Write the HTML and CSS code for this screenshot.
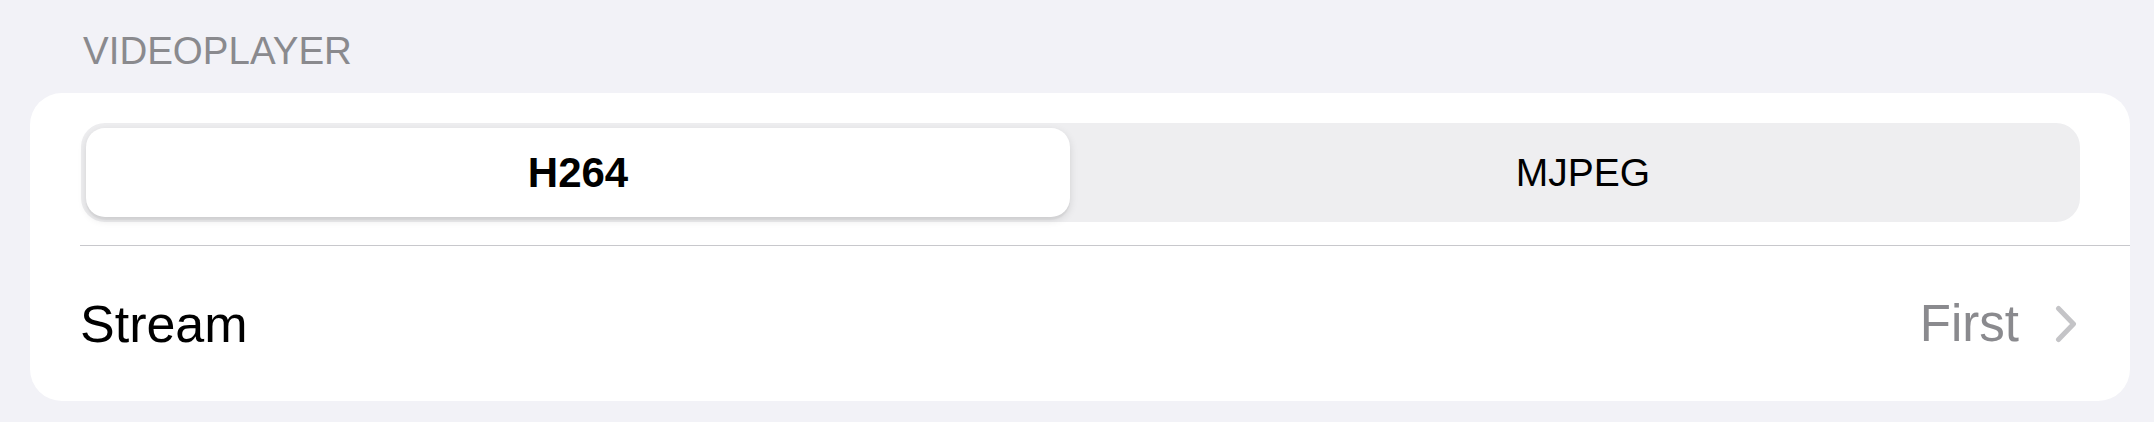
FILE: index.html
```html
<!DOCTYPE html>
<html lang="en">
<head>
  <meta charset="UTF-8" />
  <meta name="viewport" content="width=device-width, initial-scale=1.0" />
  <title>Videoplayer Settings</title>
  <link rel="stylesheet" href="styles.css">
</head>
<body>

<section class="group">
  <h2 class="group-title">VIDEOPLAYER</h2>

  <div class="card">
    <div class="segment-row">
      <div class="segmented">
        <button class="segment selected">H264</button>
        <button class="segment">MJPEG</button>
      </div>
    </div>

    <a href="#" class="row">
      <span class="row-label">Stream</span>
      <span class="row-value">First</span>
      <svg class="chevron" width="22" height="38" viewBox="0 0 22 38">
        <polyline points="3.5,3.5 18.5,19 3.5,34.5" />
      </svg>
    </a>
  </div>
</section>

</body>
</html>
```

FILE: styles.css
```css
body {
  font-family: 'Liberation Sans', Arial, sans-serif;
  background-color: #F2F2F7;
  color: #000000;
  margin: 0;
  padding: 0 24px 0 30px;
}
.group-title {
  margin: 0 0 24px 0;
  padding: 32px 0 0 53px;
  font-size: 38.5px;
  line-height: 37px;
  font-weight: 400;
  color: #8A8A8E;
}
.card {
  background-color: #FFFFFF;
  border-radius: 32px;
  overflow: hidden;
}
.segment-row {
  margin-left: 50px;
  padding: 30px 50px 23px 1px;
  border-bottom: 1px solid #C8C8CC;
}
.segmented {
  display: grid;
  grid-template-columns: 1fr 1fr;
  column-gap: 21px;
  height: 99px;
  box-sizing: border-box;
  padding: 5px;
  background-color: #EEEEF0;
  border-radius: 24px;
}
.segment {
  border: none;
  background: transparent;
  font-family: inherit;
  font-size: 39px;
  color: #000000;
  padding: 0;
  border-radius: 19px;
}
.segment.selected {
  background-color: #FFFFFF;
  font-weight: 700;
  font-size: 42px;
  box-shadow: 0 3px 8px rgba(0,0,0,0.12), 0 3px 1px rgba(0,0,0,0.04);
}
.row {
  display: flex;
  align-items: center;
  height: 155px;
  padding: 0 53px 0 50px;
  text-decoration: none;
  color: inherit;
  font-size: 52px;
}
.row-label {
  flex: 1;
}
.row-value {
  color: #8A8A8E;
  margin-right: 36px;
  font-size: 51px;
}
.chevron {
  display: block;
  fill: none;
  stroke: #C4C4C7;
  stroke-width: 5;
  stroke-linecap: round;
  stroke-linejoin: round;
}
```
